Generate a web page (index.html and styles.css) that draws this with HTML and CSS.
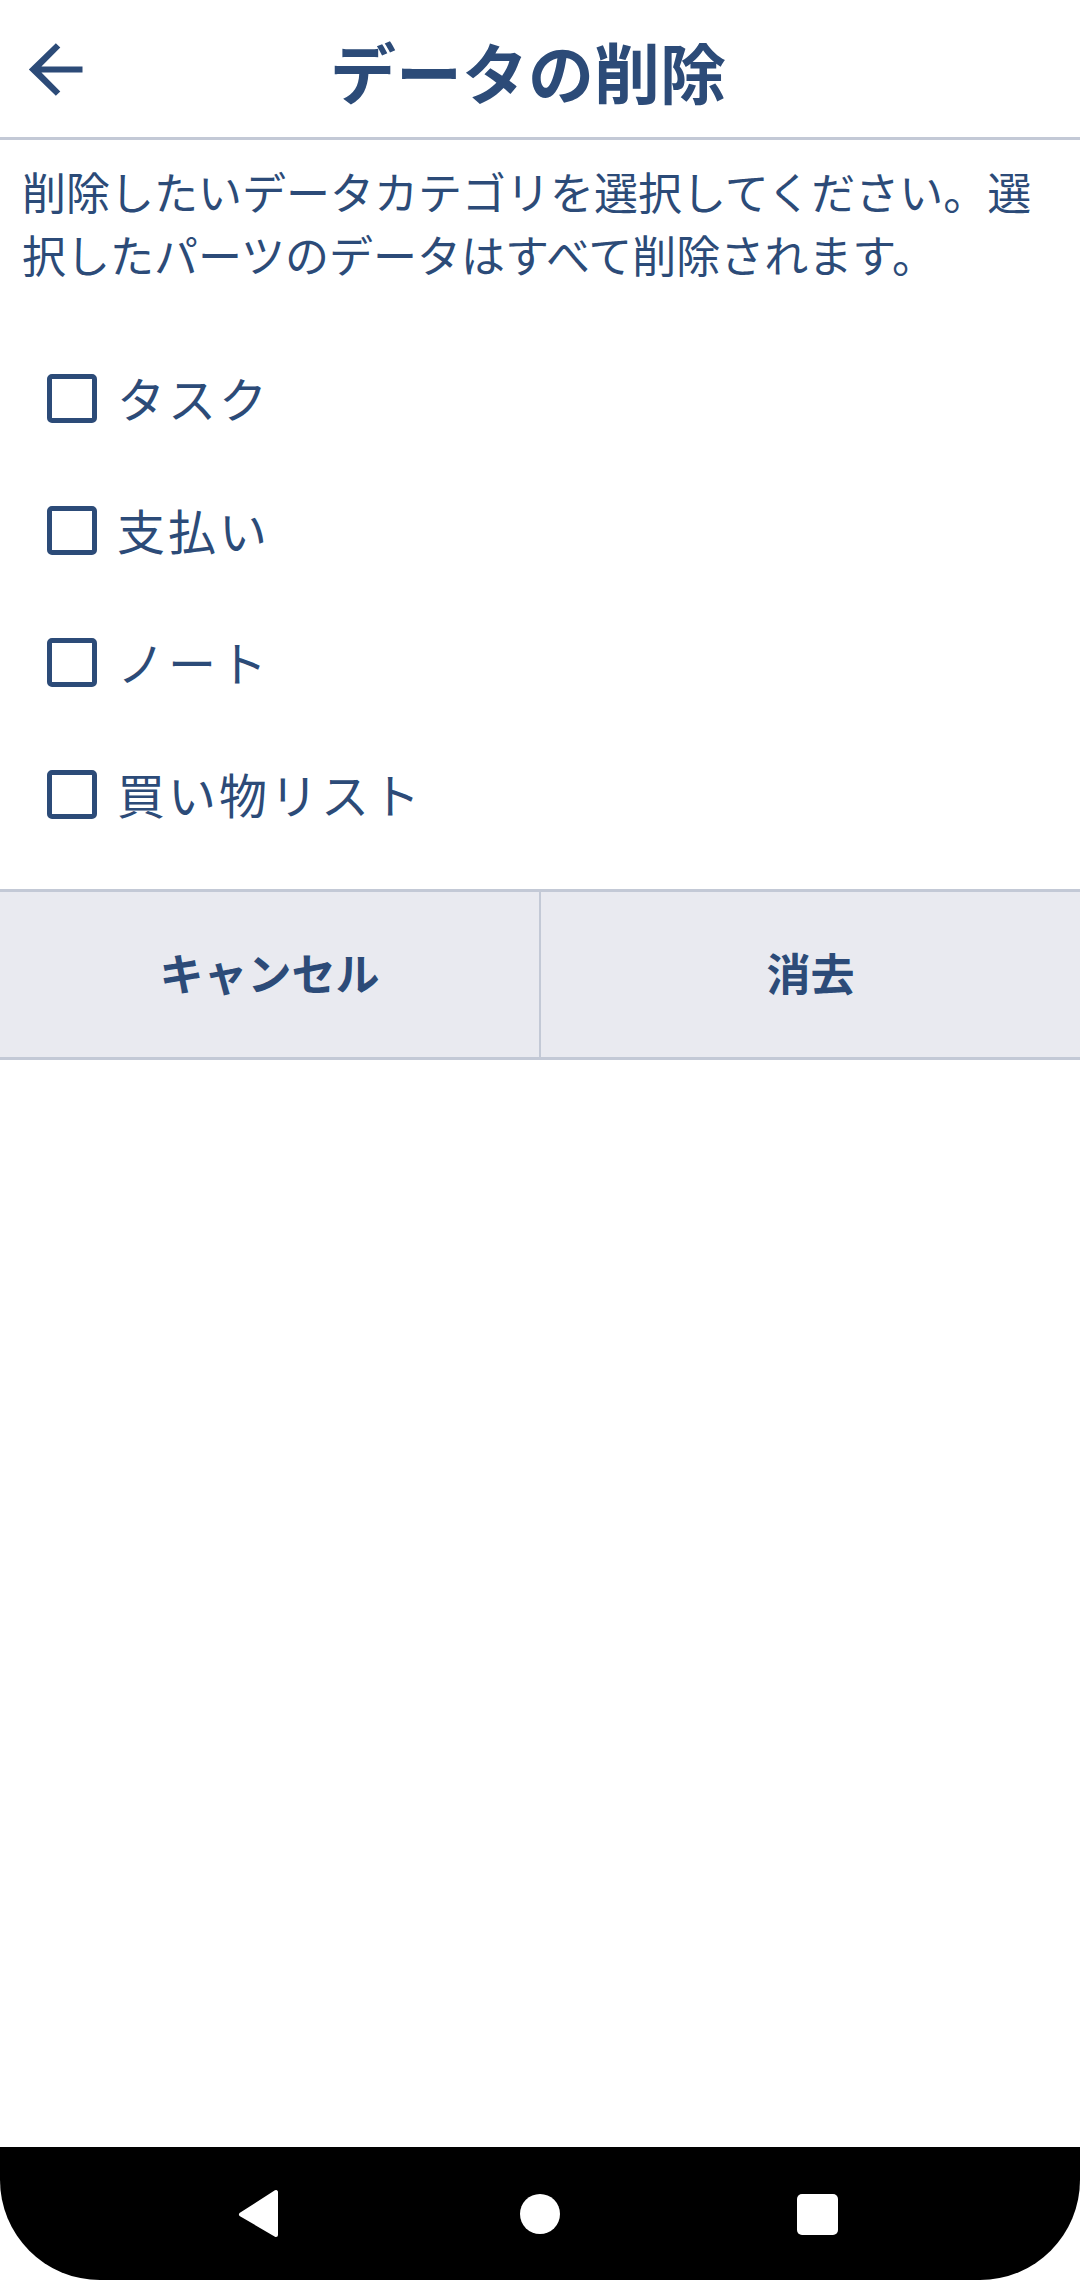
FILE: index.html
```html
<!DOCTYPE html>
<html lang="ja">
<head>
<meta charset="utf-8">
<title>データの削除</title>
<link rel="stylesheet" href="styles.css">
</head>
<body>
<div class="screen">
  <header class="topbar">
    <div class="back">
      <svg width="81" height="81" viewBox="0 0 24 24"><path d="M20 11.1H7.83l5.59-5.59L12.1 4.2l-8 7.8 8 7.8 1.32-1.31L7.83 12.9H20z" fill="#2c4b78"/></svg>
    </div>
    <h1 class="title">データの削除</h1>
    <div class="spacer"></div>
  </header>
  <p class="desc">削除したいデータカテゴリを選択してください。選択したパーツのデータはすべて削除されます。</p>
  <ul class="options">
    <li class="option"><span class="box"></span><span class="label">タスク</span></li>
    <li class="option"><span class="box"></span><span class="label">支払い</span></li>
    <li class="option"><span class="box"></span><span class="label">ノート</span></li>
    <li class="option"><span class="box"></span><span class="label">買い物リスト</span></li>
  </ul>
  <div class="actions">
    <button class="btn">キャンセル</button>
    <button class="btn btn-right">消去</button>
  </div>
  <div class="fill"></div>
  <nav class="navbar">
    <svg width="1080" height="133" viewBox="0 0 1080 133">
      <path d="M276 45 L276 88 L241 67.5 Z" fill="#fff" stroke="#fff" stroke-width="4" stroke-linejoin="round"/>
      <circle cx="540" cy="67" r="20" fill="#fff"/>
      <rect x="797" y="47" width="41" height="41" rx="5" fill="#fff"/>
    </svg>
  </nav>
</div>
</body>
</html>
```
FILE: styles.css
```css
html, body {
  margin: 0;
  padding: 0;
  background: #ffffff;
}
.screen {
  width: 1080px;
  height: 2280px;
  display: flex;
  flex-direction: column;
  font-family: "Noto Sans CJK JP", "Noto Sans", sans-serif;
  color: #2c4b78;
}
.topbar {
  height: 137px;
  border-bottom: 3px solid #c3c9d6;
  display: grid;
  grid-template-columns: 110px 1fr 134px;
  align-items: center;
}
.back {
  display: flex;
  align-items: center;
  padding-left: 15px;
  padding-top: 2px;
}
.back svg {
  display: block;
}
.title {
  margin: 0;
  text-align: center;
  font-size: 66px;
  font-weight: 700;
  line-height: 1;
  padding-top: 2px;
  color: #2c4b78;
}
.desc {
  margin: 0;
  padding: 20px 22px 0 22px;
  font-size: 44px;
  line-height: 63px;
}
.options {
  list-style: none;
  margin: 46px 0 29px 0;
  padding: 0;
}
.option {
  height: 132px;
  display: flex;
  align-items: center;
  padding-left: 47px;
  gap: 20px;
}
.box {
  width: 50px;
  height: 49px;
  box-sizing: border-box;
  border: 5px solid #2c4b78;
  border-radius: 5px;
  flex: none;
}
.label {
  font-size: 48px;
  letter-spacing: 3px;
  line-height: 1;
  padding-bottom: 2px;
}
.actions {
  display: flex;
  height: 165px;
  border-top: 3px solid #c3c9d6;
  border-bottom: 3px solid #c3c9d6;
  background: #e9eaf0;
}
.btn {
  flex: 1;
  border: none;
  margin: 0;
  background: #e9eaf0;
  font-family: "Noto Sans CJK JP", "Noto Sans", sans-serif;
  font-size: 44px;
  font-weight: 700;
  color: #2c4b78;
  padding: 0 0 5px 0;
}
.btn-right {
  border-left: 2px solid #c3c9d6;
}
.fill {
  flex: 1;
}
.navbar {
  height: 133px;
  background: #000;
  border-radius: 0 0 100px 100px;
}
.navbar svg {
  display: block;
}
```
